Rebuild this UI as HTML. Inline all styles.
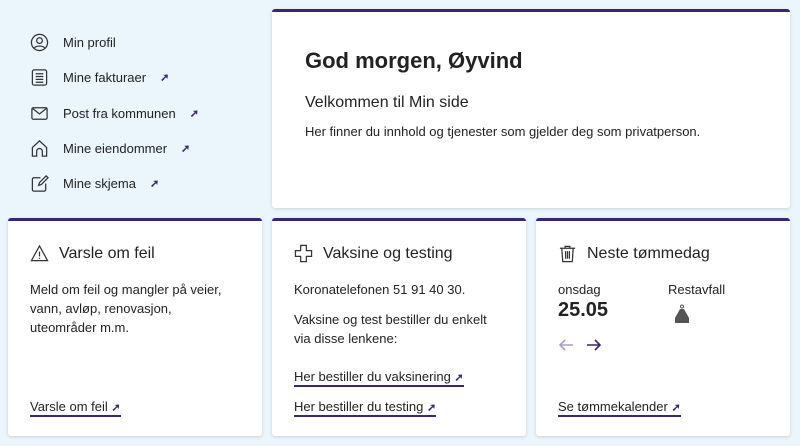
<!DOCTYPE html>
<html><head><meta charset="utf-8"><style>
*{margin:0;padding:0;box-sizing:border-box}
body{width:800px;height:446px;background:#eaf5fc;font-family:"Liberation Sans",sans-serif;color:#222;position:relative;overflow:hidden}
.card{position:absolute;background:#fff;border-top:3px solid #3a2770;border-radius:3px;box-shadow:0 1px 3px rgba(0,0,0,.15)}
.nav{position:absolute;left:30px;font-size:13px;display:flex;align-items:center}
.nav svg{width:19px;height:19px;margin-right:14px}
.ar{color:#3a2770;font-size:11px;font-weight:bold;margin-left:14px}
h2{position:absolute;font-size:16px;font-weight:normal;display:flex;align-items:center}
h2 svg{margin-right:10px}
p{position:absolute;font-size:13px;line-height:19px}
.lnk{position:absolute;font-size:13px;border-bottom:2px solid #3a2770;padding-bottom:1px}
</style></head><body>
<div class="nav" style="top:33px"><svg viewBox="0 0 20 20" fill="none" stroke="#333" stroke-width="1.3"><circle cx="10" cy="10" r="8.5"/><circle cx="10" cy="8" r="3"/><path d="M4.5 16c1.5-3 9.5-3 11 0"/></svg>Min profil</div>
<div class="nav" style="top:68px"><svg viewBox="0 0 20 20" fill="none" stroke="#333" stroke-width="1.3"><rect x="2.5" y="2" width="15" height="16" rx="2"/><path d="M6 6h8M6 9h8M6 12h8M6 15h8"/></svg>Mine fakturaer<span class="ar">➚</span></div>
<div class="nav" style="top:104px"><svg viewBox="0 0 20 20" fill="none" stroke="#333" stroke-width="1.3"><rect x="2" y="4" width="16" height="12" rx="1.5"/><path d="M2.5 4.5l7.5 6 7.5-6"/></svg>Post fra kommunen<span class="ar">➚</span></div>
<div class="nav" style="top:139px"><svg viewBox="0 0 20 20" fill="none" stroke="#333" stroke-width="1.3"><path d="M2.5 18V9L10 2l7.5 7v9h-4.5v-5a3 3 0 0 0-6 0v5z"/></svg>Mine eiendommer<span class="ar">➚</span></div>
<div class="nav" style="top:174px"><svg viewBox="0 0 20 20" fill="none" stroke="#333" stroke-width="1.3"><path d="M11 4H4a1.5 1.5 0 0 0-1.5 1.5v11A1.5 1.5 0 0 0 4 18h11a1.5 1.5 0 0 0 1.5-1.5V10"/><path d="M9 12l1-3 7-7 2 2-7 7z"/></svg>Mine skjema<span class="ar">➚</span></div>

<div class="card" style="left:272px;top:9px;width:518px;height:199px">
<div style="position:absolute;left:33px;top:36px;font-size:22px;font-weight:bold">God morgen, Øyvind</div>
<div style="position:absolute;left:33px;top:82px;font-size:16px">Velkommen til Min side</div>
<p style="left:33px;top:110px">Her finner du innhold og tjenester som gjelder deg som privatperson.</p>
</div>

<div class="card" style="left:8px;top:218px;width:254px;height:218px">
<h2 style="left:22px;top:23px"><svg width="19" height="19" viewBox="0 0 20 20" fill="none" stroke="#333" stroke-width="1.3"><path d="M10 2L1.5 17.5h17z"/><path d="M10 8v5M10 14.5v1.2"/></svg>Varsle om feil</h2>
<p style="left:22px;top:59px">Meld om feil og mangler på veier,<br>vann, avløp, renovasjon,<br>uteområder m.m.</p>
<span class="lnk" style="left:22px;top:178px">Varsle om feil <b style="color:#3a2770;font-size:11px">➚</b></span>
</div>

<div class="card" style="left:272px;top:218px;width:254px;height:218px">
<h2 style="left:22px;top:23px"><svg width="19" height="19" viewBox="0 0 20 20" fill="none" stroke="#333" stroke-width="1.3"><path d="M7 1.5h6v5.5h5.5v6H13v5.5H7V13H1.5V7H7z"/></svg>Vaksine og testing</h2>
<p style="left:22px;top:59px">Koronatelefonen 51 91 40 30.</p>
<p style="left:22px;top:89px">Vaksine og test bestiller du enkelt<br>via disse lenkene:</p>
<span class="lnk" style="left:22px;top:148px">Her bestiller du vaksinering <b style="color:#3a2770;font-size:11px">➚</b></span>
<span class="lnk" style="left:22px;top:178px">Her bestiller du testing <b style="color:#3a2770;font-size:11px">➚</b></span>
</div>

<div class="card" style="left:536px;top:218px;width:254px;height:218px">
<h2 style="left:22px;top:23px"><svg width="19" height="19" viewBox="0 0 20 20" fill="none" stroke="#333" stroke-width="1.3"><path d="M2 4.5h16M7.5 4.5V2.5h5v2M4 4.5l1 14h10l1-14M8 7.5v8M10 7.5v8M12 7.5v8"/></svg>Neste tømmedag</h2>
<p style="left:22px;top:59px">onsdag</p>
<p style="left:132px;top:59px">Restavfall</p>
<div style="position:absolute;left:22px;top:78px;font-size:20px;font-weight:bold">25.05</div>
<svg style="position:absolute;left:138px;top:83px" width="16" height="20" viewBox="0 0 16 20"><circle cx="8" cy="2.5" r="1.5" fill="none" stroke="#555"/><path d="M6 5h4l5 9v5H1v-5z" fill="#555"/></svg>
<svg style="position:absolute;left:22px;top:116px" width="50" height="16" viewBox="0 0 50 16" fill="none" stroke-width="1.6"><path d="M15 8H2M7 3L2 8l5 5" stroke="#a99cc8"/><path d="M29 8h13M37 3l5 5-5 5" stroke="#3a2770"/></svg>
<span class="lnk" style="left:22px;top:178px">Se tømmekalender <b style="color:#3a2770;font-size:11px">➚</b></span>
</div>
</body></html>
